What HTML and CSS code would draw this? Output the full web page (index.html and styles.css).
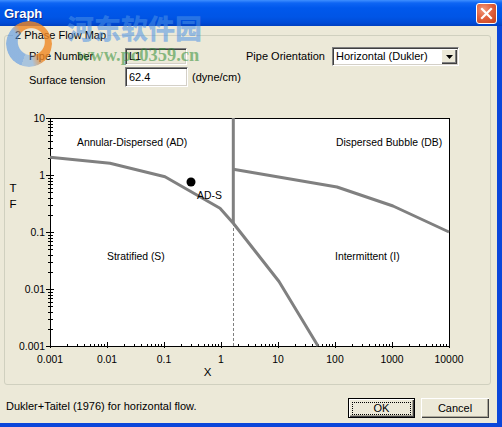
FILE: index.html
```html
<!DOCTYPE html>
<html>
<head>
<meta charset="utf-8">
<title>Graph</title>
<link rel="stylesheet" href="styles.css">
</head>
<body>
<div class="window">
  <div class="titlebar">
    <span class="title">Graph</span>
    <span class="close">
      <svg width="21" height="21" viewBox="0 0 21 21"><path d="M6 6L15 15M15 6L6 15" stroke="#fff" stroke-width="2.2" stroke-linecap="square"/></svg>
    </span>
  </div>
  <div class="client">
    <fieldset class="group">
      <legend>2 Phase Flow Map</legend>
      <div class="form">
        <div class="row row1">
          <span class="label">Pipe Number</span>
          <span class="field static">L1</span>
          <span class="label orient">Pipe Orientation</span>
          <span class="combo">
            <span class="combo-text">Horizontal (Dukler)</span>
            <span class="combo-btn"><svg width="7" height="4" viewBox="0 0 7 4"><path d="M0 0H7L3.5 4Z" fill="#000"/></svg></span>
          </span>
        </div>
        <div class="row row2">
          <span class="label low">Surface tension</span>
          <span class="field edit">62.4</span>
          <span class="unit">(dyne/cm)</span>
        </div>
      </div>
      <svg class="chart" width="484" height="289" viewBox="5 95 484 289">
        <rect class="plot" x="50.5" y="118.5" width="399" height="228"/>
        <path class="tick" d="M67.5 344V347M77.5 344V347M84.5 344V347M90.5 344V347M94.5 344V347M98.5 344V347M101.5 344V347M104.5 344V347
          M124.5 344V347M134.5 344V347M141.5 344V347M147.5 344V347M151.5 344V347M155.5 344V347M158.5 344V347M161.5 344V347
          M181.5 344V347M191.5 344V347M198.5 344V347M204.5 344V347M208.5 344V347M212.5 344V347M215.5 344V347M218.5 344V347
          M238.5 344V347M248.5 344V347M255.5 344V347M261.5 344V347M265.5 344V347M269.5 344V347M272.5 344V347M275.5 344V347
          M295.5 344V347M305.5 344V347M312.5 344V347M318.5 344V347M322.5 344V347M326.5 344V347M329.5 344V347M332.5 344V347
          M352.5 344V347M362.5 344V347M369.5 344V347M375.5 344V347M379.5 344V347M383.5 344V347M386.5 344V347M389.5 344V347
          M409.5 344V347M419.5 344V347M426.5 344V347M432.5 344V347M436.5 344V347M440.5 344V347M443.5 344V347M446.5 344V347
          M50.5 342V348M107.5 342V348M164.5 342V348M221.5 342V348M278.5 342V348M335.5 342V348M392.5 342V348M449.5 342V348
          M48 329.5H53M48 319.5H53M48 312.5H53M48 306.5H53M48 302.5H53M48 298.5H53M48 295.5H53M48 292.5H53
          M48 272.5H53M48 262.5H53M48 255.5H53M48 249.5H53M48 245.5H53M48 241.5H53M48 238.5H53M48 235.5H53
          M48 215.5H53M48 205.5H53M48 198.5H53M48 192.5H53M48 188.5H53M48 184.5H53M48 181.5H53M48 178.5H53
          M48 158.5H53M48 148.5H53M48 141.5H53M48 135.5H53M48 131.5H53M48 127.5H53M48 124.5H53M48 121.5H53
          M46 346.5H54M46 289.5H54M46 232.5H54M46 175.5H54M46 118.5H54"/>
        <path class="dash" d="M233.5 223V346"/>
        <path class="curve" d="M50 157.3L110 163.3L165 176.7L220 208.3L233.3 223.3L279 281.5L318 346"/>
        <path class="curve" d="M233.3 118V223.3"/>
        <path class="curve" d="M233.3 169.3L337 187L393 206L449 232"/>
        <circle cx="191" cy="182" r="4.5" fill="#000"/>
        <text class="lbl" x="77" y="146">Annular-Dispersed (AD)</text>
        <text class="lbl" x="197" y="199">AD-S</text>
        <text class="lbl" x="336" y="146">Dispersed Bubble (DB)</text>
        <text class="lbl" x="107" y="260">Stratified (S)</text>
        <text class="lbl" x="335" y="260">Intermittent (I)</text>
        <g class="lbl" text-anchor="end">
          <text x="45" y="122">10</text>
          <text x="45" y="179">1</text>
          <text x="45" y="236">0.1</text>
          <text x="45" y="293">0.01</text>
          <text x="45" y="350">0.001</text>
        </g>
        <g class="lbl" text-anchor="middle">
          <text x="50" y="362.5">0.001</text>
          <text x="107" y="362.5">0.01</text>
          <text x="164" y="362.5">0.1</text>
          <text x="221" y="362.5">1</text>
          <text x="278" y="362.5">10</text>
          <text x="335" y="362.5">100</text>
          <text x="392" y="362.5">1000</text>
          <text x="449" y="362.5">10000</text>
        </g>
        <g class="axis-title" text-anchor="middle">
          <text x="207.5" y="376">X</text>
          <text x="13" y="191.5">T</text>
          <text x="13" y="207.5">F</text>
        </g>
      </svg>
    </fieldset>
    <div class="footer">
      <span class="status">Dukler+Taitel (1976) for horizontal flow.</span>
      <button class="btn default">OK</button>
      <button class="btn cancel">Cancel</button>
    </div>
  </div>
  <div class="overlay-text">
    <span class="ov-mark"></span>
    <span class="ov-words">
      <span class="ov-cn">河东软件园</span>
      <span class="ov-url">www.pc0359.cn</span>
    </span>
  </div>
</div>
</body>
</html>
```
FILE: styles.css
```css
body {
  margin: 0;
  background: #fff;
  font-family: "Liberation Sans", Arial, sans-serif;
  font-size: 11px;
  color: #000;
}

.window {
  position: relative;
  width: 502px;
  height: 427px;
  background: #0A46DA;
  display: flex;
  flex-direction: column;
  overflow: hidden;
}

.titlebar {
  height: 26px;
  flex: none;
  display: flex;
  align-items: center;
  justify-content: space-between;
  padding: 0 5px 0 4px;
  background: linear-gradient(to bottom, #3F8FFF 0, #0E65F4 3px, #0058EC 8px, #0055E6 17px, #004BD6 23px, #0040C0 26px);
}

.title {
  color: #fff;
  font-weight: bold;
  font-size: 13px;
  text-shadow: 1px 1px #0A2A90;
}

.close {
  width: 21px;
  height: 21px;
  box-sizing: border-box;
  border: 1px solid #fff;
  border-radius: 3px;
  background: radial-gradient(circle at 35% 30%, #F09A7E 0, #E2623E 45%, #C4401A 100%);
  display: flex;
  align-items: center;
  justify-content: center;
}

.close svg {
  display: block;
  margin: -1px;
}

.client {
  flex: 1;
  margin: 0 5px 4px 0;
  background: #ECE9D8;
  display: flex;
  flex-direction: column;
}

.group {
  margin: 3px 6px 0 4px;
  padding: 0;
  border: 1px solid #D0D0BF;
  border-radius: 3px;
  min-width: 0;
}

.group legend {
  margin-left: 8px;
  padding: 0 2px;
  line-height: 13px;
  font-size: 11px;
}

.form {
  margin-top: 5px;
  padding-left: 24px;
  display: flex;
  flex-direction: column;
  gap: 1px;
}

.row {
  display: flex;
  align-items: center;
}

.row1 { height: 19px; }
.row2 { height: 20px; }

.label {
  width: 96px;
  flex: none;
  line-height: 13px;
}

.label.low { margin-top: 6px; }

.orient {
  width: 86px;
  margin-left: 59px;
}

.field {
  box-sizing: border-box;
  flex: none;
  border: 1px solid;
  border-color: #808080 #fff #fff #808080;
  box-shadow: inset 1px 1px #404040, inset -1px -1px #D4D0C8;
  padding-left: 3px;
  display: flex;
  align-items: center;
  line-height: 13px;
}

.static {
  width: 62px;
  height: 17px;
  background: #ECE9D8;
}

.edit {
  width: 63px;
  height: 20px;
  background: #fff;
}

.unit {
  margin-left: 4px;
  line-height: 13px;
}

.combo {
  box-sizing: border-box;
  width: 127px;
  height: 19px;
  flex: none;
  background: #fff;
  border: 1px solid;
  border-color: #808080 #fff #fff #808080;
  box-shadow: inset 1px 1px #404040, inset -1px -1px #D4D0C8;
  padding: 1px;
  display: flex;
  align-items: center;
}

.combo-text {
  flex: 1;
  padding-left: 2px;
  line-height: 13px;
}

.combo-btn {
  width: 16px;
  height: 15px;
  box-sizing: border-box;
  background: #ECE9D8;
  box-shadow: inset 1px 1px #fff, inset -1px -1px #404040, inset -2px -2px #808080;
  display: flex;
  align-items: center;
  justify-content: center;
}

.combo-btn svg { display: block; }

.chart {
  display: block;
  margin-top: 8px;
}

.plot {
  fill: #fff;
  stroke: #000;
  stroke-width: 1;
}

.tick {
  stroke: #000;
  stroke-width: 1;
  fill: none;
}

.dash {
  stroke: #808080;
  stroke-width: 1;
  stroke-dasharray: 3 2;
  fill: none;
}

.curve {
  stroke: #808080;
  stroke-width: 3;
  fill: none;
  stroke-linejoin: round;
}

.lbl {
  font-family: "Liberation Sans", Arial, sans-serif;
  font-size: 10.4px;
  fill: #000;
}

.axis-title {
  font-family: "Liberation Sans", Arial, sans-serif;
  font-size: 11.5px;
  fill: #000;
}

.footer {
  display: flex;
  align-items: flex-start;
  gap: 6px;
  padding: 13px 8px 0 6px;
}

.status {
  flex: 1;
  margin-top: 2px;
  line-height: 13px;
}

.btn {
  position: relative;
  box-sizing: border-box;
  width: 67px;
  height: 20px;
  padding: 0;
  border: none;
  background: #ECE9D8;
  font-family: "Liberation Sans", Arial, sans-serif;
  font-size: 11px;
  color: #000;
  box-shadow: inset 1px 1px #fff, inset -1px -1px #404040, inset -2px -2px #ACA899;
}

.btn.cancel { width: 68px; }

.btn.default {
  border: 1px solid #000;
}

.btn.default::after {
  content: "";
  position: absolute;
  top: 3px;
  left: 3px;
  right: 3px;
  bottom: 2px;
  border: 1px dotted #000;
}

.overlay-text {
  position: absolute;
  left: 6px;
  top: 13px;
  display: flex;
  align-items: flex-start;
  gap: 15px;
  pointer-events: none;
}

.ov-mark {
  display: block;
  flex: none;
  width: 46px;
  height: 46px;
  margin-top: 8px;
  border-radius: 50%;
  background:
    radial-gradient(circle at 38% 30%, rgba(236, 233, 216, 0) 0, rgba(236, 233, 216, 0) 40%, transparent 41%),
    conic-gradient(from 200deg, rgba(70, 140, 230, 0.55) 0deg, rgba(70, 140, 230, 0.55) 110deg, rgba(240, 135, 35, 0.8) 130deg, rgba(240, 135, 35, 0.8) 300deg, rgba(70, 140, 230, 0.4) 330deg);
  -webkit-mask: radial-gradient(circle at 55% 45%, transparent 0, transparent 13px, #000 14px);
  mask: radial-gradient(circle at 55% 45%, transparent 0, transparent 13px, #000 14px);
}

.ov-words {
  display: flex;
  flex-direction: column;
}

.ov-cn {
  font-family: "Noto Sans CJK SC", sans-serif;
  font-weight: 900;
  font-size: 27px;
  line-height: 30px;
  color: rgba(75, 145, 230, 0.55);
}

.ov-url {
  margin-left: 10px;
  margin-top: 3px;
  font-family: "Liberation Serif", serif;
  font-weight: bold;
  font-size: 18.5px;
  line-height: 18px;
  color: rgba(45, 140, 50, 0.55);
}
```
